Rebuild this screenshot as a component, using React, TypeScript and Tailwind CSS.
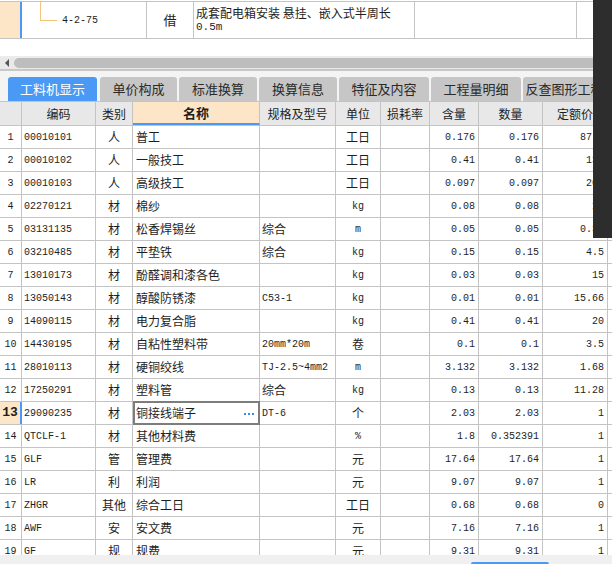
const cjk = "font-['Noto_Sans_CJK_SC','Noto_Sans',sans-serif]";
const mono = "font-['Liberation_Mono','Noto_Sans_CJK_SC',monospace]";

const widths = [
  "w-[22px]",
  "w-[74px]",
  "w-[37px]",
  "w-[127px]",
  "w-[76px]",
  "w-[45px]",
  "w-[49px]",
  "w-[49px]",
  "w-[64px]",
  "w-[65px]",
];

const headers = ["", "编码", "类别", "名称", "规格及型号", "单位", "损耗率", "含量", "数量", "定额价"];

// code, type, name, spec, unit, loss, content, qty, price
type Row = [string, string, string, string, string, string, string, string, string];

const rows: Row[] = [
  ["00010101", "人", "普工", "", "工日", "", "0.176", "0.176", "87.1"],
  ["00010102", "人", "一般技工", "", "工日", "", "0.41", "0.41", "134"],
  ["00010103", "人", "高级技工", "", "工日", "", "0.097", "0.097", "201"],
  ["02270121", "材", "棉纱", "", "kg", "", "0.08", "0.08", "12"],
  ["03131135", "材", "松香焊锡丝", "综合", "m", "", "0.05", "0.05", "0.36"],
  ["03210485", "材", "平垫铁", "综合", "kg", "", "0.15", "0.15", "4.5"],
  ["13010173", "材", "酚醛调和漆各色", "", "kg", "", "0.03", "0.03", "15"],
  ["13050143", "材", "醇酸防锈漆", "C53-1", "kg", "", "0.01", "0.01", "15.66"],
  ["14090115", "材", "电力复合脂", "", "kg", "", "0.41", "0.41", "20"],
  ["14430195", "材", "自粘性塑料带", "20mm*20m", "卷", "", "0.1", "0.1", "3.5"],
  ["28010113", "材", "硬铜绞线", "TJ-2.5~4mm2", "m", "", "3.132", "3.132", "1.68"],
  ["17250291", "材", "塑料管", "综合", "kg", "", "0.13", "0.13", "11.28"],
  ["29090235", "材", "铜接线端子", "DT-6", "个", "", "2.03", "2.03", "1"],
  ["QTCLF-1", "材", "其他材料费", "", "%", "", "1.8", "0.352391", "1"],
  ["GLF", "管", "管理费", "", "元", "", "17.64", "17.64", "1"],
  ["LR", "利", "利润", "", "元", "", "9.07", "9.07", "1"],
  ["ZHGR", "其他", "综合工日", "", "工日", "", "0.68", "0.68", "0"],
  ["AWF", "安", "安文费", "", "元", "", "7.16", "7.16", "1"],
  ["GF", "规", "规费", "", "元", "", "9.31", "9.31", "1"],
];

const tabs = [
  { label: "工料机显示", w: "w-[89px]" },
  { label: "单价构成", w: "w-[77px]" },
  { label: "标准换算", w: "w-[78px]" },
  { label: "换算信息", w: "w-[78px]" },
  { label: "特征及内容", w: "w-[90px]" },
  { label: "工程量明细", w: "w-[90px]" },
  { label: "反查图形工程量", w: "w-[96px]" },
];

const hasCjk = (s: string) => /[\u3000-\u9fff]/.test(s);

function Cell({ text, col }: { text: string; col: number }) {
  const align =
    col === 2 || col === 5
      ? "justify-center"
      : col >= 7
        ? "justify-end pr-[3px]"
        : col === 3
          ? "justify-start pl-[3px]"
          : "justify-start pl-[2px]";
  const font = hasCjk(text) ? `${cjk} text-[12px]` : `${mono} text-[10px]`;
  return (
    <div
      className={`${widths[col]} flex h-full shrink-0 items-center overflow-hidden whitespace-nowrap border-r border-[#c4c4c4] ${align} ${font}`}
    >
      {text}
    </div>
  );
}

export default function App() {
  return (
    <div className="relative flex h-[564px] w-[612px] flex-col overflow-hidden bg-white text-[#1e1e1e]">
      {/* upper list row */}
      <div className="h-px shrink-0 bg-white" />
      <div className="flex h-[38px] shrink-0 border-y border-[#c4c4c4]">
        <div className="w-[20px] shrink-0 bg-[#fde6c8]" />
        <div className="w-[2px] shrink-0 bg-[#4a9af5]" />
        <div className="relative flex w-[125px] shrink-0 items-center border-r border-[#c4c4c4]">
          <div className="absolute left-[18px] top-0 h-[18px] w-px bg-[#f7c47e]" />
          <div className="absolute left-[18px] top-[18px] h-px w-[17px] bg-[#f7c47e]" />
          <span className={`${mono} ml-[40px] text-[10px]`}>4-2-75</span>
        </div>
        <div className={`${cjk} flex w-[47px] shrink-0 items-center justify-center border-r border-[#c4c4c4] text-[13px]`}>
          借
        </div>
        <div className="flex w-[221px] shrink-0 flex-col justify-center border-r border-[#c4c4c4] pl-[2px] leading-[14px]">
          <span className={`${cjk} whitespace-nowrap text-[12px]`}>成套配电箱安装 悬挂、嵌入式半周长</span>
          <span className={`${mono} text-[11px]`}>0.5m</span>
        </div>
        <div className="w-[162px] shrink-0 border-r border-[#c4c4c4]" />
        <div className="flex-1" />
      </div>

      <div className="h-[17px] shrink-0 bg-white" />
      <div className="h-[2px] shrink-0 bg-[#ececec]" />
      {/* horizontal scrollbar */}
      <div className="flex h-[10px] shrink-0 bg-[#e9e9e9]">
        <div className="flex w-[14px] shrink-0 items-center justify-center">
          <div className="h-0 w-0 border-y-[4px] border-r-[4px] border-y-transparent border-r-[#555]" />
        </div>
        <div className="flex-1 rounded-l-[5px] bg-[#bdbdbd]" />
      </div>
      <div className="h-[1px] shrink-0 bg-[#e8e8e8]" />
      <div className="h-[2px] shrink-0 bg-[#c8c8c8]" />
      <div className="h-[6px] shrink-0 bg-[#f4f4f4]" />

      {/* tabs */}
      <div className={`${cjk} flex h-[24px] shrink-0 gap-[2px] bg-[#f4f4f4] pl-[8px] text-[13px]`}>
        {tabs.map((t, i) => (
          <div
            key={t.label}
            className={`${t.w} flex shrink-0 items-center justify-center overflow-hidden whitespace-nowrap rounded-t-[3px] ${
              i === 0 ? "bg-[#4a9af5] text-white" : "bg-[#c6c6c6] text-[#2a2a2a]"
            } ${i === 1 ? "ml-px" : ""}`}
          >
            {t.label}
          </div>
        ))}
      </div>

      {/* header */}
      <div className={`${cjk} flex h-[25px] shrink-0 border-y border-[#c4c4c4] bg-[#e8e8e8] text-[12px]`}>
        {headers.map((h, i) => (
          <div
            key={i}
            className={`${widths[i]} flex h-full shrink-0 items-center justify-center overflow-hidden whitespace-nowrap border-r border-[#c4c4c4] ${
              i === 3 ? "border-b-2 border-b-[#4a9af5] bg-[#fde6c8] text-[13px] font-bold" : ""
            }`}
          >
            {h}
          </div>
        ))}
      </div>

      {/* rows */}
      <div className="flex-1 overflow-hidden">
        {rows.map((r, idx) => {
          const n = idx + 1;
          const sel = n === 13;
          return (
            <div key={n} className="flex h-[23px] border-b border-[#c4c4c4]">
              <div
                className={`${mono} flex h-full w-[22px] shrink-0 items-center justify-center border-r ${
                  sel
                    ? "border-r-2 border-r-[#4a9af5] bg-[#fde6c8] text-[13px] font-bold"
                    : "border-[#c4c4c4] text-[10px]"
                }`}
              >
                {n}
              </div>
              {r.map((v, c) =>
                sel && c === 2 ? (
                  <div
                    key={c}
                    className={`${cjk} relative -my-px flex h-[24px] w-[127px] shrink-0 items-center border-2 border-[#7d7d7d] pl-[1px] text-[12px]`}
                  >
                    {v}
                    <div className="absolute right-[4px] top-[10px] flex gap-[2px]">
                      <div className="h-[2px] w-[2px] bg-[#3b8be6]" />
                      <div className="h-[2px] w-[2px] bg-[#3b8be6]" />
                      <div className="h-[2px] w-[2px] bg-[#3b8be6]" />
                    </div>
                  </div>
                ) : (
                  <Cell key={c} text={v} col={c + 1} />
                )
              )}
            </div>
          );
        })}
      </div>

      {/* bottom strip */}
      <div className="relative h-[9px] shrink-0 bg-[#f0f0f0]">
        <div className="absolute bottom-0 left-[471px] h-[2px] w-[78px] rounded-t-[2px] bg-[#4a9af5]" />
      </div>

      {/* dark side panel overlay */}
      <div className="absolute right-0 top-0 h-[238px] w-[19px] bg-[#2d2d2d]" />
    </div>
  );
}
